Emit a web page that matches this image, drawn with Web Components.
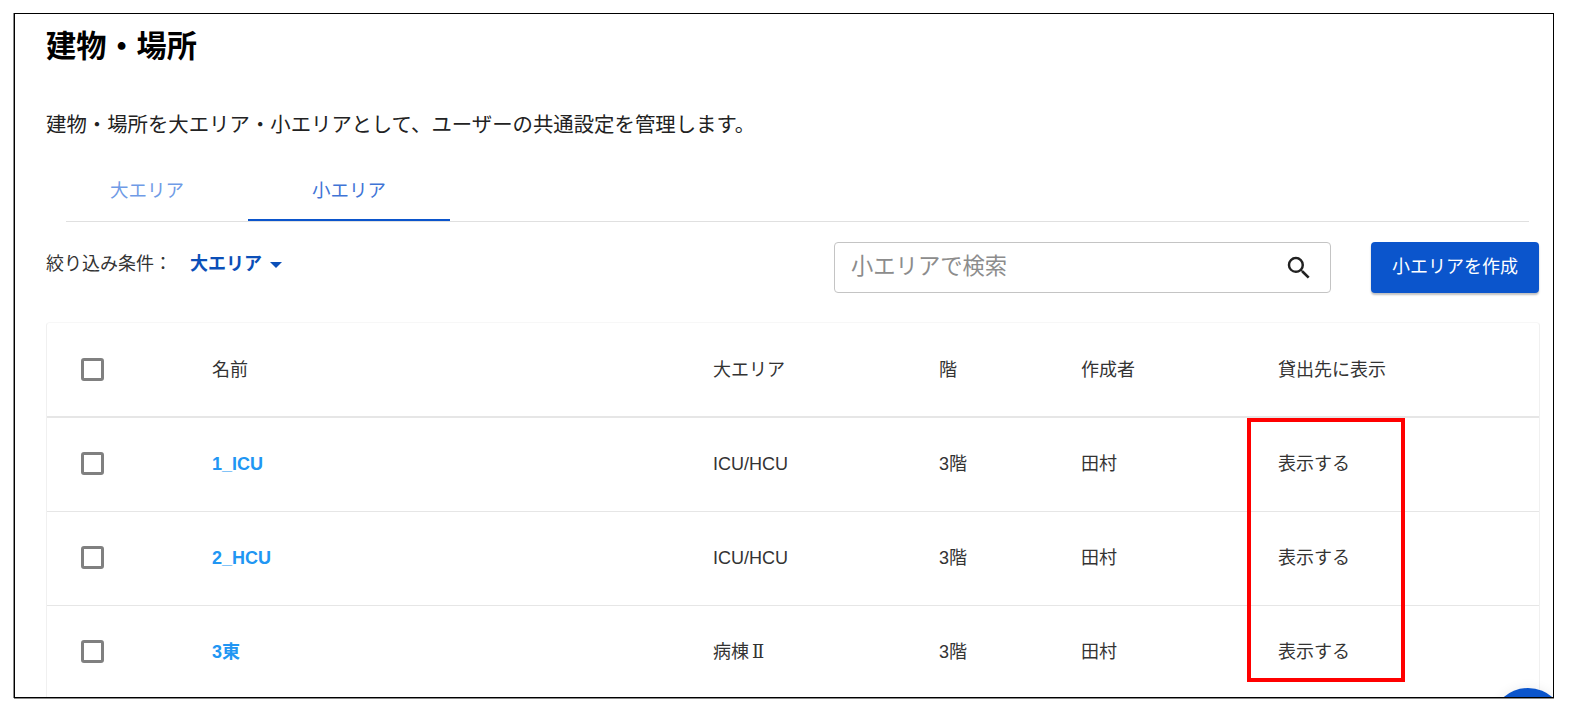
<!DOCTYPE html>
<html lang="ja">
<head>
<meta charset="utf-8">
<title>建物・場所</title>
<style>
    html, body { margin: 0; background: #fff; height: 100%; overflow: hidden; }
    body { font-family: "Liberation Sans", "Noto Sans CJK JP", sans-serif; color: #333; }
</style>
</head>
<body>
<app-frame>
    <page-header heading="建物・場所" lead="建物・場所を大エリア・小エリアとして、ユーザーの共通設定を管理します。"></page-header>
    <area-tabs></area-tabs>
    <filter-bar></filter-bar>
    <area-table>
        <area-row header name="名前" area="大エリア" floor="階" author="作成者" show="貸出先に表示"></area-row>
        <area-row name="1_ICU" area="ICU/HCU" floor="3階" author="田村" show="表示する"></area-row>
        <area-row name="2_HCU" area="ICU/HCU" floor="3階" author="田村" show="表示する"></area-row>
        <area-row name="3東" area="病棟Ⅱ" floor="3階" author="田村" show="表示する"></area-row>
    </area-table>
</app-frame>
<script>
class AppFrame extends HTMLElement {
    constructor() {
        super();
        this.attachShadow({ mode: 'open' }).innerHTML = `
            <style>
            :host {
                display: block;
                position: relative;
                box-sizing: border-box;
                width: 1540px;
                height: 685px;
                margin: 13px 0 0 14px;
                padding: 0 0 0 31px;
                border: 1px solid #000;
                box-shadow: -1px 0 0 #8a8a8a, 0 1px 0 #8a8a8a;
            }
            .clip {
                position: absolute;
                inset: 0;
                overflow: hidden;
                pointer-events: none;
            }
            .mark {
                position: absolute;
                left: 1232px;
                top: 404px;
                width: 150px;
                height: 256px;
                border: 4px solid #f00;
            }
            .fab {
                position: absolute;
                left: 1476px;
                top: 674px;
                width: 74px;
                height: 74px;
                border-radius: 50%;
                background: #0b55cc;
                box-shadow: 0 0 12px rgba(0, 0, 0, .08);
            }
            .body { height: 683px; overflow: hidden; }
            </style>
            <div class="body"><slot></slot></div>
            <div class="clip">
                <div class="mark"></div>
                <div class="fab"></div>
            </div>
        `;
    }
}

class PageHeader extends HTMLElement {
    connectedCallback() {
        this.attachShadow({ mode: 'open' }).innerHTML = `
            <style>
            :host { display: block; }
            h1 {
                margin: 0;
                padding-top: 13px;
                font-size: 30.2px;
                line-height: 40px;
                font-weight: 700;
                color: #000;
            }
            p {
                margin: 0;
                padding-top: 44px;
                font-size: 20.4px;
                line-height: 28px;
                color: #222;
            }
            </style>
            <h1>${this.getAttribute('heading')}</h1>
            <p>${this.getAttribute('lead')}</p>
        `;
    }
}

class AreaTabs extends HTMLElement {
    constructor() {
        super();
        this.attachShadow({ mode: 'open' }).innerHTML = `
            <style>
            :host {
                display: flex;
                height: 60px;
                margin: 22px 24px 0 20px;
                border-bottom: 1px solid #e0e0e0;
                font-size: 18.5px;
            }
            div {
                box-sizing: border-box;
                width: 202px;
                height: 60px;
                padding-bottom: 4px;
                display: flex;
                align-items: center;
                justify-content: center;
                color: #6f9be6;
            }
            .first { margin-left: -20px; }
            .active {
                padding-bottom: 2px;
                color: #3f74d6;
                border-bottom: 2px solid #0b55cc;
            }
            </style>
            <div class="first">大エリア</div>
            <div class="active">小エリア</div>
        `;
    }
}

class FilterBar extends HTMLElement {
    constructor() {
        super();
        this.attachShadow({ mode: 'open' }).innerHTML = `
            <style>
            :host {
                display: flex;
                align-items: flex-start;
                height: 100px;
                padding-top: 20px;
                box-sizing: border-box;
                font-size: 18px;
            }
            .label { line-height: 44px; color: #333; width: 144px; }
            .select {
                line-height: 44px;
                font-weight: 700;
                color: #0b4fb8;
                display: flex;
                align-items: center;
                gap: 8px;
                width: 644px;
            }
            .select svg { width: 12px; height: 6px; margin-top: 2px; }
            .search {
                box-sizing: border-box;
                width: 497px;
                height: 51px;
                display: flex;
                align-items: center;
                justify-content: space-between;
                padding: 0 18px 0 16px;
                border: 1px solid #c4c4c4;
                border-radius: 4px;
                font-size: 22.3px;
                color: #8c8c8c;
            }
            .search span { line-height: 28px; margin-bottom: 2px; }
            .search svg { width: 30px; height: 30px; margin-right: -2px; }
            button {
                margin-left: 40px;
                width: 168px;
                height: 51px;
                border: 0;
                border-radius: 4px;
                background: #0b55cc;
                color: #fff;
                font: inherit;
                line-height: 24px;
                padding: 0 0 2px;
                box-shadow: 0 2px 2px rgba(0, 0, 0, .25);
            }
            </style>
            <div class="label">絞り込み条件：</div>
            <div class="select">大エリア<svg viewBox="0 0 12 6"><path d="M0 0h12L6 6z" fill="#0b4fb8"/></svg></div>
            <div class="search"><span>小エリアで検索</span>
                <svg viewBox="0 0 24 24"><path fill="#212121" d="M15.5 14h-.79l-.28-.27A6.47 6.47 0 0 0 16 9.5 6.5 6.5 0 1 0 9.5 16c1.61 0 3.09-.59 4.23-1.57l.27.28v.79l5 4.99L20.49 19l-4.99-5zm-6 0C7.01 14 5 11.99 5 9.5S7.01 5 9.5 5 14 7.01 14 9.5 11.99 14 9.5 14z"/></svg>
            </div>
            <button>小エリアを作成</button>
        `;
    }
}

class AreaTable extends HTMLElement {
    constructor() {
        super();
        this.attachShadow({ mode: 'open' }).innerHTML = `
            <style>
            :host {
                display: block;
                width: 1494px;
                height: 400px;
                box-sizing: border-box;
                border: 1px solid #f0f0f0;
                border-top-color: #f7f7f7;
                border-radius: 4px 4px 0 0;
            }
            </style>
            <slot></slot>
        `;
    }
}

class AreaRow extends HTMLElement {
    connectedCallback() {
        const isHeader = this.hasAttribute('header');
        const attr = (key) => this.getAttribute(key);
        // the reference draws the roman numeral with serifs
        const area = attr('area').replace('Ⅱ', '<span class="num">Ⅱ</span>');
        this.attachShadow({ mode: 'open' }).innerHTML = `
            <style>
            :host {
                display: grid;
                grid-template-columns: 165px 501px 226px 142px 197px 1fr;
                align-items: center;
                box-sizing: border-box;
                height: 94px;
                padding-bottom: 2px;
                border-bottom: 1px solid #e6e6e6;
                font-size: 18px;
                line-height: 24px;
                color: #333;
            }
            :host([header]) { height: 95px; padding-bottom: 0; border-bottom-width: 2px; }
            .check {
                box-sizing: border-box;
                width: 23px;
                height: 23px;
                margin-left: 34px;
                border: 3px solid #808080;
                border-radius: 3px;
            }
            .name { font-weight: ${isHeader ? 400 : 700}; color: ${isHeader ? '#333' : '#2196f3'}; }
            .num { font-family: "DejaVu Serif", serif; font-size: 18px; margin-left: 3px; }
            </style>
            <div class="check"></div>
            <div class="name">${attr('name')}</div>
            <div>${area}</div>
            <div>${attr('floor')}</div>
            <div>${attr('author')}</div>
            <div>${attr('show')}</div>
        `;
    }
}

customElements.define('app-frame', AppFrame);
customElements.define('page-header', PageHeader);
customElements.define('area-tabs', AreaTabs);
customElements.define('filter-bar', FilterBar);
customElements.define('area-table', AreaTable);
customElements.define('area-row', AreaRow);
</script>
</body>
</html>
